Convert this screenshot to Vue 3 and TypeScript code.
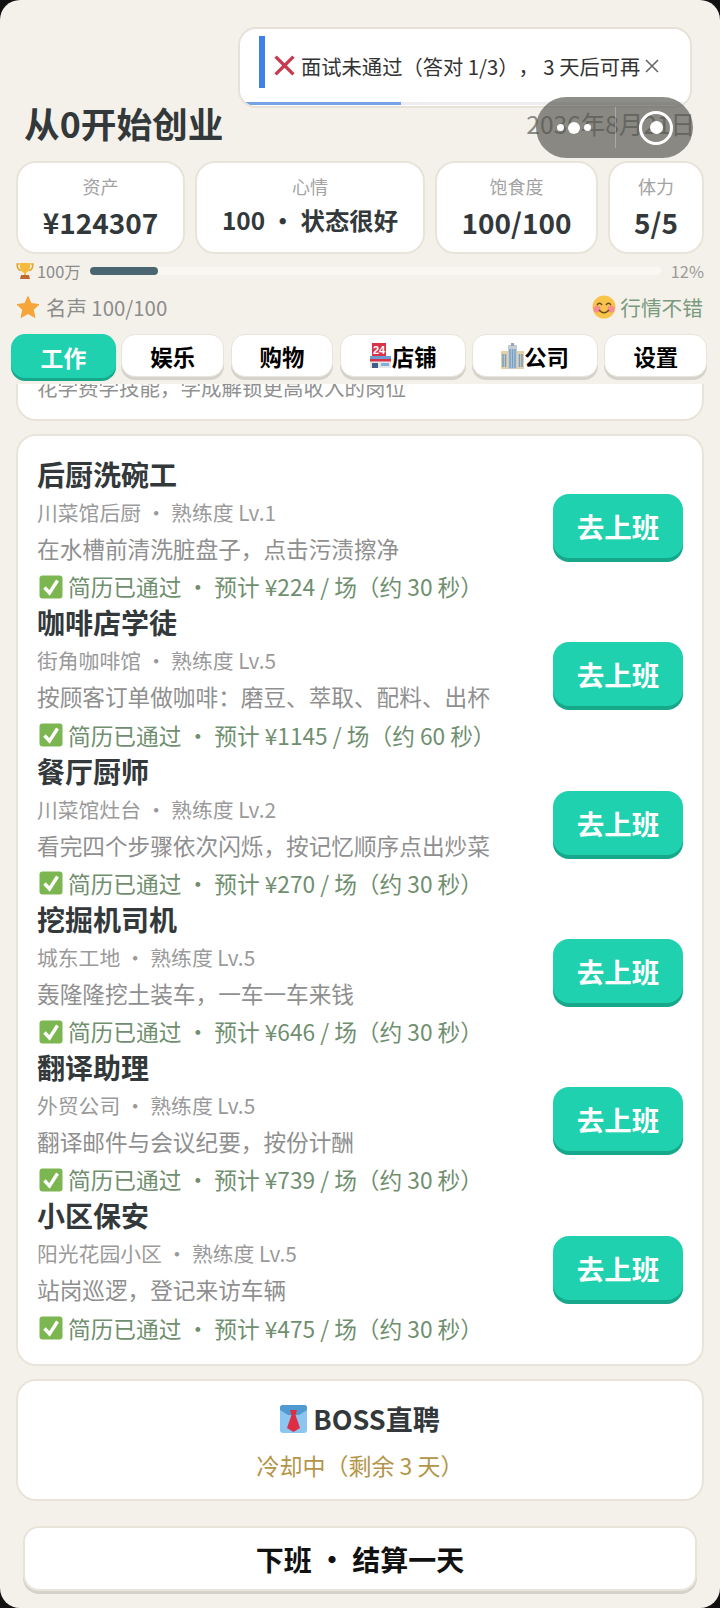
<script setup lang="ts">
interface Job {
  name: string;
  place: string;
  level: number;
  desc: string;
  pay: number;
  secs: number;
}

const stats = [
  { label: "资产", value: "¥124307" },
  { label: "心情", value: "100 · 状态很好", small: true },
  { label: "饱食度", value: "100/100" },
  { label: "体力", value: "5/5" },
];

const tabs = [
  { name: "工作", active: true },
  { name: "娱乐" },
  { name: "购物" },
  { name: "店铺", icon: "store" },
  { name: "公司", icon: "office" },
  { name: "设置" },
];

const jobs: Job[] = [
  { name: "后厨洗碗工", place: "川菜馆后厨", level: 1, desc: "在水槽前清洗脏盘子\uFF0C点击污渍擦净", pay: 224, secs: 30 },
  { name: "咖啡店学徒", place: "街角咖啡馆", level: 5, desc: "按顾客订单做咖啡\uFF1A磨豆、萃取、配料、出杯", pay: 1145, secs: 60 },
  { name: "餐厅厨师", place: "川菜馆灶台", level: 2, desc: "看完四个步骤依次闪烁\uFF0C按记忆顺序点出炒菜", pay: 270, secs: 30 },
  { name: "挖掘机司机", place: "城东工地", level: 5, desc: "轰隆隆挖土装车\uFF0C一车一车来钱", pay: 646, secs: 30 },
  { name: "翻译助理", place: "外贸公司", level: 5, desc: "翻译邮件与会议纪要\uFF0C按份计酬", pay: 739, secs: 30 },
  { name: "小区保安", place: "阳光花园小区", level: 5, desc: "站岗巡逻\uFF0C登记来访车辆", pay: 475, secs: 30 },
];
</script>

<template>
  <div class="page">
    <div class="toast">
      <span class="toast-bar"></span>
      <svg class="toast-x" viewBox="0 0 20 20">
        <path d="M1.500 1.500 L18.500 18.500 M18.500 1.500 L1.500 18.500" stroke="#c93a4e" stroke-width="3.200" fill="none" />
      </svg>
      <span class="toast-text">面试未通过&#xFF08;答对 1/3&#xFF09;&#xFF0C; 3 天后可再</span>
      <svg class="toast-close" viewBox="0 0 14 14">
        <path d="M1 1 L13 13 M13 1 L1 13" stroke="#666" stroke-width="1.600" fill="none" />
      </svg>
      <span class="toast-progress"><i></i></span>
    </div>

    <div class="capsule">
      <div class="capsule-dots"><i class="d1"></i><i class="d2"></i><i class="d3"></i></div>
      <span class="capsule-line"></span>
      <div class="capsule-target"><i></i></div>
    </div>

    <header class="header">
      <h1>从0开始创业</h1>
      <span class="date">2036年8月21日</span>
    </header>

    <section class="stats">
      <div v-for="s of stats" :key="s.label" class="stat">
        <div class="stat-label">{{ s.label }}</div>
        <div class="stat-value" :class="{ small: s.small }">{{ s.value }}</div>
      </div>
    </section>

    <section class="goal">
      <svg class="trophy" viewBox="0 0 18 18">
        <path d="M3 2 H1.200 C1 6 2.500 8 5 8.500 M15 2 H16.800 C17 6 15.500 8 13 8.500" stroke="#e2a52e" stroke-width="1.600" fill="none" />
        <path d="M3.500 1 H14.500 C14.500 7 12.500 10 10 10.800 V13 H8 V10.800 C5.500 10 3.500 7 3.500 1 Z" fill="#f4bb3e" />
        <path d="M5 13 H13 L14 17 H4 Z" fill="#bf6a34" />
      </svg>
      <span class="goal-text">100万</span>
      <div class="goal-track"><div class="goal-fill" :style="{ width: '12%' }"></div></div>
      <span class="goal-pct">12%</span>
    </section>

    <section class="fame">
      <div class="fame-left">
        <svg class="star" viewBox="0 0 24 24">
          <path d="M12 1.500 L15.200 8.600 L23 9.500 L17.200 14.700 L18.900 22.500 L12 18.500 L5.100 22.500 L6.800 14.700 L1 9.500 L8.800 8.600 Z" fill="#f7a53a" stroke="#f7a53a" stroke-linejoin="round" />
        </svg>
        <span>名声 100/100</span>
      </div>
      <div class="fame-right">
        <svg class="smile" viewBox="0 0 24 24">
          <circle cx="12" cy="12" r="11.500" fill="#f8c44c" />
          <circle cx="5" cy="14" r="3.600" fill="#f58d8d" />
          <circle cx="19" cy="14" r="3.600" fill="#f58d8d" />
          <path d="M5 10 Q7.500 6.500 10 10 M14 10 Q16.500 6.500 19 10" stroke="#6b4a1e" stroke-width="1.500" fill="none" />
          <path d="M7 15 Q12 20.500 17 15" stroke="#6b4a1e" stroke-width="1.500" fill="none" />
        </svg>
        <span>行情不错</span>
      </div>
    </section>

    <nav class="tabs">
      <button v-for="t of tabs" :key="t.name" class="tab" :class="{ active: t.active }">
        <svg v-if="t.icon === 'store'" class="tab-icon" viewBox="0 0 23 26">
          <rect x="3" y="0" width="14" height="13" fill="#d8324a" />
          <text x="10" y="11" font-size="11" font-weight="700" fill="#fff" text-anchor="middle" font-family="Liberation Sans, sans-serif">24</text>
          <rect x="1" y="13" width="21" height="5" fill="#6c9cd0" />
          <rect x="1" y="18" width="21" height="7" fill="#e8e6e2" />
          <rect x="1" y="16" width="21" height="2.500" fill="#d8324a" />
          <rect x="3" y="20" width="6" height="5" fill="#3f5f86" />
          <rect x="12" y="20" width="8" height="3" fill="#7fb0dc" />
        </svg>
        <svg v-else-if="t.icon === 'office'" class="tab-icon" viewBox="0 0 23 26">
          <rect x="0" y="8" width="23" height="18" fill="#e6cfa6" />
          <rect x="7" y="2" width="9" height="24" fill="#c5cdd4" />
          <rect x="10" y="0" width="3" height="3" fill="#9aa4ad" />
          <path d="M2 11 V24 M4.500 11 V24 M9 6 V25 M11.500 6 V25 M14 6 V25 M18.500 11 V24 M21 11 V24" stroke="#6f9fca" stroke-width="1.500" />
        </svg>
        <span>{{ t.name }}</span>
      </button>
    </nav>

    <main class="scroller">
      <div class="card hint">花学费学技能&#xFF0C;学成解锁更高收入的岗位</div>

      <div class="card jobs">
        <div v-for="j of jobs" :key="j.name" class="job">
          <div class="job-info">
            <div class="job-name">{{ j.name }}</div>
            <div class="job-sub">{{ j.place }} · 熟练度 Lv.{{ j.level }}</div>
            <div class="job-desc">{{ j.desc }}</div>
            <div class="job-pay">
              <svg class="check" viewBox="0 0 24 24">
                <rect x="0.500" y="0.500" width="23" height="23" rx="3" fill="#7cb650" />
                <path d="M5.500 12.500 L10.500 18 L18.500 5.500" stroke="#fff" stroke-width="3.400" fill="none" />
              </svg>
              <span>简历已通过 · 预计 ¥{{ j.pay }} / 场&#xFF08;约 {{ j.secs }} 秒&#xFF09;</span>
            </div>
          </div>
          <button class="work">去上班</button>
        </div>
      </div>

      <div class="card boss">
        <div class="boss-title">
          <svg class="tie" viewBox="0 0 27 28">
            <rect width="27" height="28" rx="3" fill="#8cc6f0" />
            <path d="M0 3 Q0 0 3 0 H24 Q27 0 27 3 V5 L19 10 H8 L0 5 Z" fill="#4f9ad0" />
            <path d="M10 5 H17 L15.500 10 L20 23 L13.500 27 L7 23 L11.500 10 Z" fill="#dd2e44" />
          </svg>
          <span>BOSS直聘</span>
        </div>
        <div class="boss-sub">冷却中&#xFF08;剩余 3 天&#xFF09;</div>
      </div>
    </main>

    <footer class="footer">
      <button class="end">下班 · 结算一天</button>
    </footer>
  </div>
</template>

<style>
html,
body {
  margin: 0;
  background: #111;
}
</style>

<style scoped>
.page {
  position: relative;
  display: flex;
  flex-direction: column;
  width: 720px;
  height: 1608px;
  overflow: hidden;
  border-radius: 20px;
  background: #f4f1ea;
  font-family: "Noto Sans CJK SC", "Noto Sans", sans-serif;
  text-spacing-trim: space-all;
}

button {
  font-family: inherit;
  cursor: pointer;
}

.toast {
  position: absolute;
  top: 27px;
  left: 238px;
  z-index: 5;
  display: flex;
  align-items: center;
  box-sizing: border-box;
  width: 454px;
  height: 81px;
  padding: 0 0 4px 19px;
  overflow: hidden;
  background: #fff;
  border: 2px solid #e6e2d8;
  border-radius: 18px;
}

.toast-bar {
  width: 6px;
  height: 52px;
  margin-top: -7px;
  background: #3f7fe8;
}

.toast-x {
  flex-shrink: 0;
  width: 21px;
  height: 21px;
  margin: 0 6px 0 9px;
}

.toast-text {
  flex-shrink: 0;
  width: 339px;
  overflow: hidden;
  font-size: 20.300px;
  line-height: 30px;
  color: #333;
  white-space: nowrap;
}

.toast-close {
  flex-shrink: 0;
  width: 14px;
  height: 14px;
  margin-left: 5px;
}

.toast-progress {
  position: absolute;
  left: 4px;
  right: 4px;
  bottom: 1px;
  height: 3px;
  background: #eeecf0;
}

.toast-progress i {
  display: block;
  width: 157px;
  height: 100%;
  background: #74a3e6;
}

.capsule {
  position: absolute;
  top: 97px;
  left: 536px;
  z-index: 6;
  display: flex;
  align-items: center;
  width: 157px;
  height: 61px;
  background: rgba(82, 82, 76, 0.66);
  border-radius: 31px;
}

.capsule-dots {
  display: flex;
  align-items: center;
  gap: 4px;
  width: 58px;
  margin-left: 21px;
}

.capsule-dots i {
  display: block;
  background: #fff;
  border-radius: 50%;
}

.d1,
.d3 {
  width: 7px;
  height: 7px;
}

.d2 {
  width: 12px;
  height: 12px;
}

.capsule-line {
  width: 1px;
  height: 41px;
  background: rgba(255, 255, 255, 0.28);
}

.capsule-target {
  display: flex;
  align-items: center;
  justify-content: center;
  box-sizing: border-box;
  width: 34px;
  height: 34px;
  margin-left: 23px;
  border: 3px solid #fff;
  border-radius: 50%;
}

.capsule-target i {
  width: 13px;
  height: 13px;
  background: #fff;
  border-radius: 50%;
}

.header {
  display: flex;
  align-items: center;
  justify-content: space-between;
  height: 50px;
  margin: 98px 25px 0 24px;
}

.header h1 {
  margin: 0;
  font-size: 35.700px;
  font-weight: 700;
  line-height: 50px;
  color: #33393b;
}

.date {
  font-size: 24.500px;
  color: #8a8a86;
}

.stats {
  display: grid;
  grid-template-columns: 169px 230px 163px 96px;
  gap: 10px;
  margin: 13px 16px 0;
}

.stat {
  box-sizing: border-box;
  height: 93px;
  padding-top: 10px;
  text-align: center;
  background: #fff;
  border: 2px solid #e8e4da;
  border-radius: 20px;
}

.stat-label {
  font-size: 18px;
  line-height: 26px;
  color: #a3a3a3;
}

.stat-value {
  margin-top: 3px;
  font-size: 28px;
  font-weight: 700;
  line-height: 40px;
  color: #33393b;
}

.stat-value.small {
  font-size: 24.400px;
  line-height: 36px;
}

.goal {
  display: flex;
  align-items: center;
  height: 18px;
  margin: 8px 16px 0;
}

.trophy {
  width: 18px;
  height: 18px;
}

.goal-text {
  margin-left: 3px;
  font-size: 16.400px;
  color: #8c8c8c;
}

.goal-track {
  flex: 1;
  height: 8px;
  margin: 0 10px 0 9px;
  background: #f9f7f2;
  border-radius: 4px;
}

.goal-fill {
  height: 100%;
  background: #4a6572;
  border-radius: 4px;
}

.goal-pct {
  font-size: 16.400px;
  color: #9a9a9a;
}

.fame {
  display: flex;
  align-items: center;
  justify-content: space-between;
  height: 30px;
  margin: 12px 17px 0 16px;
  font-size: 20.400px;
}

.fame-left,
.fame-right {
  display: flex;
  align-items: center;
  gap: 6px;
}

.fame-left {
  color: #8c8c8c;
}

.fame-right {
  gap: 4px;
  font-size: 20.700px;
  color: #7a9a7f;
}

.star,
.smile {
  width: 24px;
  height: 24px;
}

.tabs {
  display: flex;
  gap: 6.500px;
  height: 50px;
  margin: 12px 0 0 12px;
}

.tab {
  display: flex;
  align-items: center;
  justify-content: center;
  box-sizing: border-box;
  height: 43px;
  padding: 0 28px;
  font-size: 22.400px;
  font-weight: 700;
  color: #000;
  background: #fff;
  border: 1.500px solid #e8e4da;
  border-radius: 14px;
  box-shadow: 0 3px 0 #d5d2cc;
}

.tab.active {
  color: #fff;
  background: #1fd1ae;
  border-color: #1fd1ae;
  box-shadow: 0 3px 0 #17a88c;
  transform: scale(1.02) translateY(0.500px);
}

.tab-icon {
  width: 23px;
  height: 26px;
}

.scroller {
  flex: 1;
  display: flex;
  flex-direction: column;
  gap: 13px;
  min-height: 0;
  padding: 0 16px;
  overflow: hidden;
}

.card {
  box-sizing: border-box;
  flex-shrink: 0;
  background: #fff;
  border: 2px solid #e8e4da;
  border-radius: 20px;
}

.hint {
  margin-top: -34px;
  padding: 20px 19px 17px;
  font-size: 20.500px;
  line-height: 30px;
  color: #909090;
}

.jobs {
  padding: 18px 19px 20px;
}

.job {
  display: flex;
  align-items: center;
  justify-content: space-between;
}

.job-name {
  font-size: 28px;
  font-weight: 700;
  line-height: 40px;
  color: #33393b;
}

.job-sub {
  margin-top: 4px;
  font-size: 20.800px;
  line-height: 28px;
  color: #9a9a9a;
}

.job-desc {
  margin-top: 7px;
  font-size: 22.650px;
  line-height: 32px;
  color: #8f8f8f;
}

.job-pay {
  display: flex;
  align-items: center;
  gap: 5px;
  margin-top: 6.300px;
  padding-left: 2px;
  font-size: 22.700px;
  line-height: 31px;
  color: #6f8f6f;
}

.check {
  width: 24px;
  height: 24px;
}

.work {
  width: 130px;
  height: 64px;
  margin-bottom: 4px;
  font-size: 27.500px;
  font-weight: 700;
  color: #fff;
  background: #1fd1ae;
  border: 0;
  border-radius: 16px;
  box-shadow: 0 4px 0 #17a88c;
}

.boss {
  height: 122px;
  padding-top: 16px;
  text-align: center;
}

.boss-title {
  display: flex;
  align-items: center;
  justify-content: center;
  gap: 6px;
  font-size: 27px;
  font-weight: 700;
  line-height: 44px;
  color: #33393b;
}

.tie {
  width: 27px;
  height: 28px;
}

.boss-sub {
  margin-top: 6px;
  font-size: 23px;
  line-height: 36px;
  color: #b39548;
}

.footer {
  padding: 17px 23px;
}

.end {
  display: block;
  width: 100%;
  height: 65px;
  font-size: 28px;
  font-weight: 700;
  color: #111;
  background: #fff;
  border: 2px solid #e8e4da;
  border-radius: 16px;
  box-shadow: 0 3px 0 #d5d2cc;
}
</style>
